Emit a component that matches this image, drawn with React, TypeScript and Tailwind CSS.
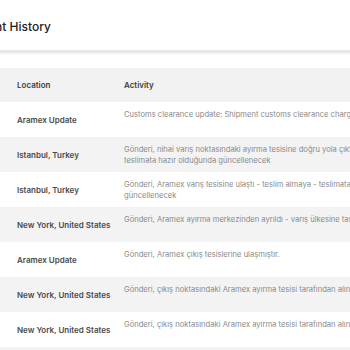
import React from "react";

const rows: { loc: string; act: React.ReactNode; gray: boolean }[] = [
  { loc: "Aramex Update", act: "Customs clearance update: Shipment customs clearance charges", gray: false },
  {
    loc: "Istanbul, Turkey",
    act: (
      <>
        Gönderi, nihai varış noktasındaki ayırma tesisine doğru yola çıktı,
        <br />
        teslimata hazır olduğunda güncellenecek
      </>
    ),
    gray: true,
  },
  {
    loc: "Istanbul, Turkey",
    act: (
      <>
        Gönderi, Aramex varış tesisine ulaştı - teslim almaya - teslimata hazır olduğunda
        <br />
        güncellenecek
      </>
    ),
    gray: false,
  },
  { loc: "New York, United States", act: "Gönderi, Aramex ayırma merkezinden ayrıldı - varış ülkesine taşınıyor", gray: true },
  { loc: "Aramex Update", act: "Gönderi, Aramex çıkış tesislerine ulaşmıştır.", gray: false },
  { loc: "New York, United States", act: "Gönderi, çıkış noktasındaki Aramex ayırma tesisi tarafından alındı", gray: true },
  { loc: "New York, United States", act: "Gönderi, çıkış noktasındaki Aramex ayırma tesisi tarafından alındı", gray: false },
];

export default function App() {
  return (
    <div
      className="w-[350px] h-[350px] overflow-hidden bg-white"
      style={{ fontFamily: "Inter, 'Noto Sans', sans-serif" }}
    >
      <div className="h-[53px] flex items-center border-b-[3px] border-[#e8e8e8] shadow-[0_1px_2px_rgba(0,0,0,0.06)]">
        <div className="ml-[-48px] pt-[3px] text-[12px] font-medium text-[#222222] whitespace-nowrap">Shipment History</div>
      </div>
      <div className="h-[15px]" />
      <div className="grid grid-cols-[124px_1fr] h-[34px] items-center bg-[#f2f2f2] text-[8px] font-semibold text-[#3c3c3c]">
        <div className="pl-[17px]">Location</div>
        <div>Activity</div>
      </div>
      {rows.map((r, i) => (
        <div
          key={i}
          className={`grid grid-cols-[124px_1fr] h-[35px] ${r.gray ? "bg-[#f3f3f3]" : "bg-white"}`}
        >
          <div className="pl-[17px] flex items-center text-[8px] font-semibold text-[#4a4a4a] whitespace-nowrap">
            {r.loc}
          </div>
          <div className="pt-[7px] text-[7.6px] leading-[11px] text-[#8a8a8a] whitespace-nowrap overflow-hidden">
            {r.act}
          </div>
        </div>
      ))}
      <div className="h-[10px] bg-[#f3f3f3]" />
    </div>
  );
}
